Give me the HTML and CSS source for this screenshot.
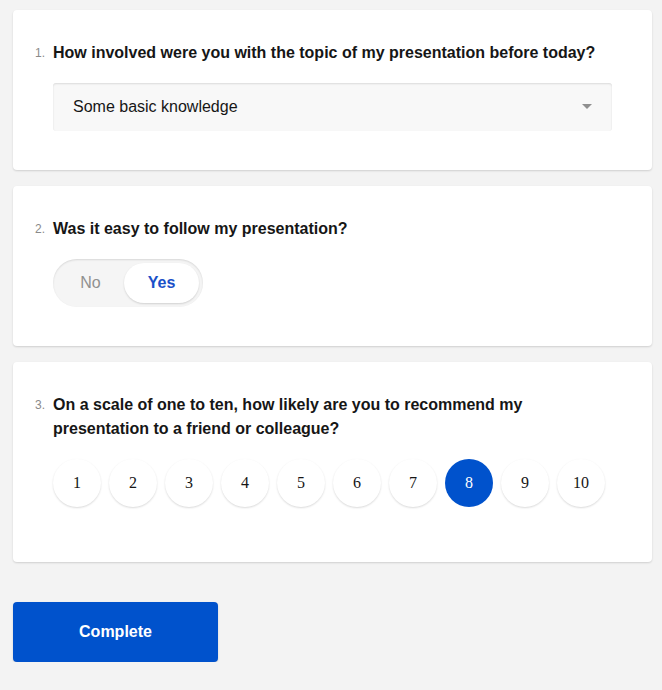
FILE: index.html
```html
<!DOCTYPE html>
<html>
<head>
<meta charset="utf-8">
<link rel="stylesheet" href="styles.css">
</head>
<body>
<div class="survey">
  <div class="card card-dropdown">
    <div class="title"><span class="num">1.</span><span class="text">How involved were you with the topic of my presentation before today?</span></div>
    <div class="dropdown">
      <span class="value">Some basic knowledge</span>
      <svg class="arrow" width="10" height="6" viewBox="0 0 10 6"><path d="M0 0H10L5 5Z" fill="#909090"/></svg>
    </div>
  </div>
  <div class="card card-toggle">
    <div class="title"><span class="num">2.</span><span class="text">Was it easy to follow my presentation?</span></div>
    <div class="toggle">
      <div class="opt opt-no">No</div>
      <div class="opt opt-yes">Yes</div>
    </div>
  </div>
  <div class="card card-rating">
    <div class="title"><span class="num">3.</span><span class="text">On a scale of one to ten, how likely are you to recommend my presentation to a friend or colleague?</span></div>
    <div class="rating">
      <div class="rate">1</div>
      <div class="rate">2</div>
      <div class="rate">3</div>
      <div class="rate">4</div>
      <div class="rate">5</div>
      <div class="rate">6</div>
      <div class="rate">7</div>
      <div class="rate selected">8</div>
      <div class="rate">9</div>
      <div class="rate">10</div>
    </div>
  </div>
  <div class="actions">
    <button class="complete">Complete</button>
  </div>
</div>
</body>
</html>
```
FILE: styles.css
```css
html, body {
  margin: 0;
  padding: 0;
  background: #f3f3f3;
  font-family: "Liberation Sans", Arial, sans-serif;
  color: #161616;
}
.survey {
  padding: 10px 10px 0 13px;
  display: flex;
  flex-direction: column;
  gap: 16px;
}
.card {
  background: #fff;
  border-radius: 4px;
  box-shadow: 0 1px 2px rgba(0,0,0,0.15);
  padding: 31px 40px 39px 40px;
  display: flex;
  flex-direction: column;
  gap: 18px;
}
.card-rating {
  padding-bottom: 55px;
}
.title {
  display: flex;
  align-items: baseline;
  font-size: 16px;
  line-height: 24px;
  font-weight: bold;
  position: relative;
}
.num {
  position: absolute;
  left: -18px;
  font-size: 12px;
  font-weight: normal;
  color: #8a8a8a;
}
.dropdown {
  height: 48px;
  background: #f8f8f8;
  border-radius: 3px;
  box-shadow: inset 0 1px 2px rgba(0,0,0,0.12);
  display: flex;
  align-items: center;
  justify-content: space-between;
  padding: 0 20px;
  font-size: 16px;
}
.toggle {
  align-self: flex-start;
  display: flex;
  padding: 4px;
  width: 150px;
  box-sizing: border-box;
  height: 48px;
  border-radius: 24px;
  background: #f5f5f5;
  box-shadow: inset 0 1px 2px rgba(0,0,0,0.12);
}
.opt {
  display: flex;
  align-items: center;
  justify-content: center;
  font-size: 16px;
  border-radius: 20px;
}
.opt-no {
  width: 67px;
  color: #909090;
}
.opt-yes {
  width: 75px;
  background: #fff;
  color: #1a50c8;
  font-weight: bold;
  box-shadow: 0 1px 2px rgba(0,0,0,0.15);
}
.rating {
  display: flex;
  gap: 8px;
}
.rate {
  width: 48px;
  height: 48px;
  border-radius: 50%;
  background: #fff;
  box-shadow: 0 1px 2px rgba(0,0,0,0.15);
  display: flex;
  align-items: center;
  justify-content: center;
  font-family: "Liberation Serif", "Times New Roman", serif;
  font-size: 16px;
  color: #161616;
}
.rate.selected {
  background: #0052cc;
  color: #fff;
  box-shadow: none;
}
.actions {
  padding-top: 24px;
}
.complete {
  width: 205px;
  height: 60px;
  border: none;
  border-radius: 4px;
  background: #0052cc;
  color: #fff;
  font-family: "Liberation Sans", Arial, sans-serif;
  font-size: 16px;
  font-weight: bold;
  box-shadow: 0 1px 2px rgba(0,0,0,0.15);
}
```
